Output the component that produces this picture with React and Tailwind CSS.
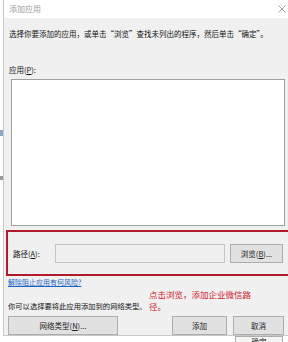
// App.jsx — "添加应用" dialog with a red annotation around the path row.

const font = "font-['Noto_Sans_CJK_SC','Microsoft_YaHei',sans-serif]"

function Btn({ children, className = '' }) {
  return (
    <div
      className={`h-[19px] flex items-center justify-center border border-[#adadad] bg-[#e1e1e1] text-[7.5px] text-[#1a1a1a] ${className}`}
    >
      {children}
    </div>
  )
}

export default function App() {
  return (
    <div className={`w-[288px] h-[342px] overflow-hidden bg-white flex ${font}`}>
      {/* sliver of the window behind */}
      <div className="w-[3px] shrink-0 flex flex-col bg-white">
        <div className="h-[130px]" />
        <div className="h-[6px] bg-[#8aa8c8]" />
        <div className="h-[40px]" />
        <div className="h-[4px] bg-[#9a9a9a]" />
      </div>

      <div className="flex-1 flex flex-col">
        <div className="border-l border-[#c8c8c8] flex flex-col">
          {/* title bar */}
          <div className="h-[18px] bg-white flex items-center justify-between pl-[5px] pr-[3px]">
            <span className="text-[8px] text-[#9a9a9a] leading-none">添加应用</span>
            <svg width="8" height="8" viewBox="0 0 8 8" className="text-[#8a8a8a]">
              <path d="M0.5 0.5L7.5 7.5M7.5 0.5L0.5 7.5" stroke="currentColor" strokeWidth="0.8" />
            </svg>
          </div>

          {/* body */}
          <div className="bg-[#f0f0f0] h-[318px] flex flex-col border-b border-[#c8c8c8]">
            <p className="mt-[10px] pl-[5px] text-[7.5px] leading-[12px] text-[#111] whitespace-nowrap">
              选择你要添加的应用，或单击“浏览”查找未列出的程序，然后单击“确定”。
            </p>

            <p className="mt-[24px] pl-[5px] text-[7.5px] leading-[12px] text-[#111]">
              应用(<span className="underline">P</span>):
            </p>

            <div className="mt-[3px] ml-[7px] mr-[4px] h-[149px] bg-white border border-[#a0a0a0]" />

            {/* red annotation box */}
            <div className="mt-[4px] ml-[2px] h-[46px] border-2 border-r-0 border-[#b01a2c] flex items-center pl-[5px] pr-[6px]">
              <span className="w-[42px] text-[7.5px] text-[#111] whitespace-nowrap">
                路径(<span className="underline">A</span>):
              </span>
              <div className="w-[170px] h-[19px] bg-[#f0f0f0] border border-[#c4c4c4]" />
              <Btn className="ml-[5px] w-[53px]">
                浏览(<span className="underline">B</span>)...
              </Btn>
            </div>

            <p className="mt-[1px] pl-[4px] text-[7px] leading-[11px] text-[#1a62c8] underline whitespace-nowrap">
              解除阻止应用有何风险?
            </p>

            <div className="flex items-end pl-[4px]">
              <p className="w-[141px] text-[7.3px] leading-[12px] text-[#111] whitespace-nowrap">
                你可以选择要将此应用添加到的网络类型。
              </p>
              <p className="w-[110px] text-[8.5px] leading-[12px] text-[#d0202e]">
                点击浏览，添加企业微信路径。
              </p>
            </div>

            <div className="mt-[4px] flex pl-[4px]">
              <Btn className="w-[110px]">
                网络类型(<span className="underline">N</span>)...
              </Btn>
              <Btn className="ml-[54px] w-[55px]">添加</Btn>
              <Btn className="ml-[6px] w-[51px]">取消</Btn>
            </div>
          </div>
        </div>

        {/* window behind, below the dialog */}
        <div className="flex-1 flex justify-end pr-[6px]">
          <div className="w-[48px] border border-[#adadad] border-b-0 bg-[#f5f5f5] flex justify-center items-start pt-[1px] text-[7.5px] leading-none text-[#111]">
            确定
          </div>
        </div>
      </div>
    </div>
  )
}
